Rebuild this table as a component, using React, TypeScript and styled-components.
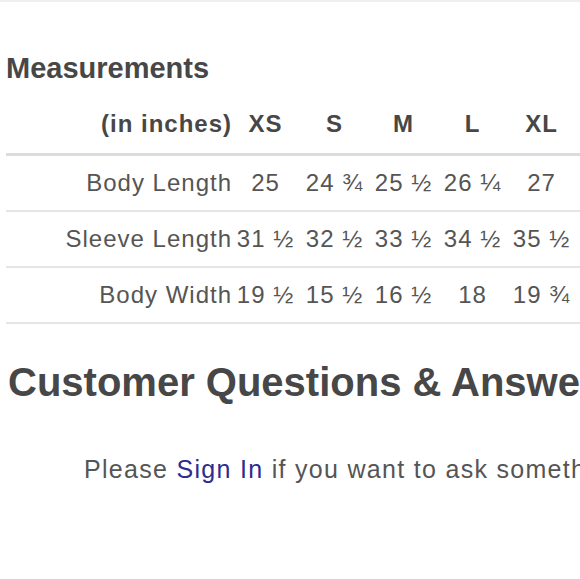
import styled, { createGlobalStyle } from "styled-components";

const GlobalStyle = createGlobalStyle`
  html, body {
    margin: 0;
    padding: 0;
    background: #fff;
    overflow: hidden;
  }
  body {
    font-family: "Liberation Sans", Arial, sans-serif;
    color: #555;
  }
`;

interface Row {
  label: string;
  values: string[];
}

const sizes = ["XS", "S", "M", "L", "XL"];

const rows: Row[] = [
  { label: "Body Length", values: ["25", "24 ¾", "25 ½", "26 ¼", "27"] },
  { label: "Sleeve Length", values: ["31 ½", "32 ½", "33 ½", "34 ½", "35 ½"] },
  { label: "Body Width", values: ["19 ½", "15 ½", "16 ½", "18", "19 ¾"] },
];

const App = () => {
  return (
    <>
      <GlobalStyle />
      <TopBar />
      <Page>
        <SectionTitle>Measurements</SectionTitle>
        <Table>
          <TableRow header>
            <LabelCell header>(in inches)</LabelCell>
            {sizes.map((s) => (
              <Cell header key={s}>
                {s}
              </Cell>
            ))}
            <Filler />
          </TableRow>
          {rows.map((r) => (
            <TableRow key={r.label}>
              <LabelCell>{r.label}</LabelCell>
              {r.values.map((v, i) => (
                <Cell key={i}>{v}</Cell>
              ))}
              <Filler />
            </TableRow>
          ))}
        </Table>
        <BigTitle>Customer Questions &amp; Answers</BigTitle>
        <Notice>
          Please <Link href="#">Sign In</Link> if you want to ask something
          about this product.
        </Notice>
      </Page>
    </>
  );
};

const TopBar = styled.div`
  height: 2px;
  background: #efefef;
`;

const Page = styled.div`
  width: 900px;
  padding: 50px 0 0 6px;
`;

const SectionTitle = styled.h2`
  margin: 0 0 11px 0;
  font-size: 29px;
  line-height: 32px;
  font-weight: 700;
  color: #474747;
`;

const Table = styled.div`
  display: flex;
  flex-direction: column;
`;

const TableRow = styled.div<{ header?: boolean }>`
  display: grid;
  grid-template-columns: 225px repeat(5, 69px) 1fr;
  align-items: center;
  padding: ${(p) => (p.header ? "15px 0" : "13px 0")};
  border-bottom: ${(p) => (p.header ? "3px solid #dcdcdc" : "2px solid #e5e5e5")};
`;

const Cell = styled.div<{ header?: boolean }>`
  text-align: center;
  white-space: nowrap;
  font-size: 24px;
  line-height: 28px;
  letter-spacing: 1px;
  font-weight: ${(p) => (p.header ? 700 : 400)};
  color: ${(p) => (p.header ? "#474747" : "#555")};
`;

const LabelCell = styled(Cell)`
  text-align: right;
  margin-right: -1px;
`;

const Filler = styled.div``;

const BigTitle = styled.h1`
  margin: 35px 0 0 2px;
  font-size: 40px;
  line-height: 46px;
  font-weight: 700;
  color: #474747;
  white-space: nowrap;
`;

const Notice = styled.p`
  margin: 50px 0 0 78px;
  font-size: 25px;
  line-height: 28px;
  letter-spacing: 1.3px;
  color: #555;
  white-space: nowrap;
`;

const Link = styled.a`
  color: #2e2c8c;
  text-decoration: none;
`;

export default App;
